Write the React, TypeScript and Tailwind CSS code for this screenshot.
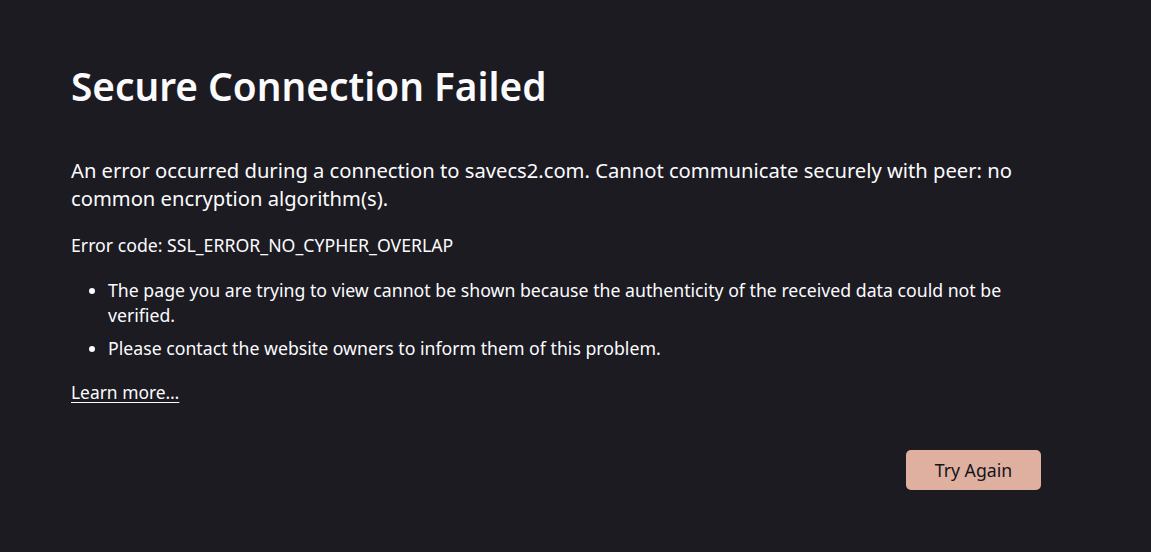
import React from "react";

export default function App() {
  return (
    <div className="min-h-[552px] w-full bg-[#1c1b22] font-['Noto_Sans',sans-serif] text-[#fbfbfe]">
      <div className="ml-[71px] w-[970px] pt-[62px]">
        <h1 className="text-[38.8px] leading-[48px] font-semibold">Secure Connection Failed</h1>
        <p className="mt-[46px] text-[20.2px] leading-[28px]">
          An error occurred during a connection to savecs2.com. Cannot communicate securely with peer: no common encryption algorithm(s).
        </p>
        <div className="mt-[21px] text-[17.7px] leading-[25px]">Error code: SSL_ERROR_NO_CYPHER_OVERLAP</div>
        <ul className="mt-[20px] list-disc pl-[37px] text-[17.7px] leading-[25px]">
          <li>The page you are trying to view cannot be shown because the authenticity of the received data could not be verified.</li>
          <li className="mt-[8px]">Please contact the website owners to inform them of this problem.</li>
        </ul>
        <a href="#" className="mt-[19px] block w-fit text-[17.4px] leading-[25px] underline underline-offset-[3px]">
          Learn more…
        </a>
        <div className="mt-[45px] flex justify-end">
          <button className="h-[40px] w-[135px] rounded-[5px] bg-[#dfaf9f] text-[17.7px] text-[#15141a]">Try Again</button>
        </div>
      </div>
    </div>
  );
}
